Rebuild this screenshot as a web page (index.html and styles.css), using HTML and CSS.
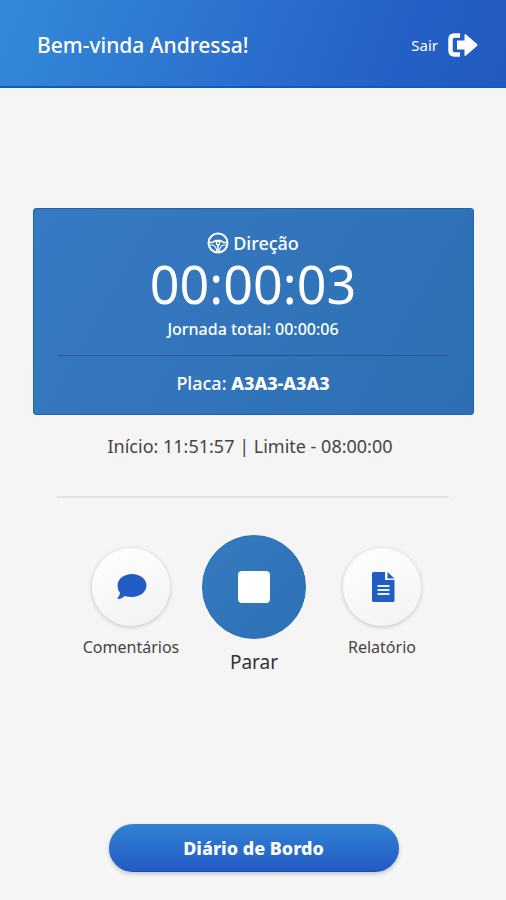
FILE: index.html
```html
<!DOCTYPE html>
<html lang="pt-BR">
<head>
  <meta charset="utf-8">
  <meta name="viewport" content="width=device-width, initial-scale=1">
  <title>Jornada</title>
  <link rel="stylesheet" href="styles.css">
</head>
<body>
  <header class="topbar">
    <h1 class="welcome">Bem-vinda Andressa!</h1>
    <a class="logout" href="#sair">
      Sair
      <svg class="logout-icon" viewBox="0 0 30 24" aria-hidden="true">
        <path d="M12 2.500H6.500Q2.500 2.500 2.500 6.500V17.500Q2.500 21.500 6.500 21.500H12" fill="none" stroke="currentColor" stroke-width="4.500"/>
        <path d="M9 7.500H16.500V2Q16.500 .5 18 1.500L29 11Q30 12 29 13L18 22.500Q16.500 23.500 16.500 22V16.500H9Z" fill="currentColor"/>
      </svg>
    </a>
  </header>

  <main class="content">
    <section class="card">
      <h2 class="status">
        <svg class="wheel-icon" viewBox="0 0 22 22" fill="none" stroke="currentColor" stroke-width="2" aria-hidden="true">
          <circle cx="11" cy="11" r="9.500"/>
          <path d="M2 10.500H5.500L8.500 8.500H13.500L16.500 10.500H20" stroke-width="1.700"/>
          <path d="M2.500 13H5.500Q9.500 14 9.800 20M19.500 13H16.500Q12.500 14 12.200 20" stroke-width="1.200"/>
          <path d="M8.500 9H13.500L13 12.500L11 14.500L9 12.500Z" fill="currentColor" stroke="none"/>
          <path d="M11 13V20" stroke-width="1.500"/>
          <circle cx="11" cy="11" r="1" fill="#3274ba" stroke="none"/>
        </svg>
        Direção
      </h2>
      <p class="timer">00:00:03</p>
      <p class="total">Jornada total: 00:00:06</p>
      <p class="plate">Placa: <strong>A3A3-A3A3</strong></p>
    </section>

    <p class="limits">Início: 11:51:57 | Limite - 08:00:00</p>

    <div class="actions">
      <button class="action" type="button">
        <span class="disc">
          <svg class="disc-icon" viewBox="0 0 30 30" fill="currentColor" aria-hidden="true">
            <path d="M16 2C24 2 30.500 7 30.500 13.500S24 25 16 25Q12 25 8.500 24Q6 27 2 27Q1 27 1.500 26Q3.500 24 4 21Q1.500 18 1.500 13.500C1.500 7 8 2 16 2Z"/>
          </svg>
        </span>
        Comentários
      </button>
      <button class="action action-main" type="button">
        <span class="disc disc-main"><span class="stop"></span></span>
        Parar
      </button>
      <button class="action" type="button">
        <span class="disc">
          <svg class="disc-icon" viewBox="0 0 30 30" aria-hidden="true">
            <path d="M6.500 0H18V8H27.500V28.500Q27.500 30 26 30H6.500Q5 30 5 28.500V1.500Q5 0 6.500 0Z" fill="currentColor"/>
            <path d="M20.500 0L27.500 6.500H20.500Z" fill="currentColor"/>
            <path d="M10.500 14H22.500M10.500 18H22.500M10.500 22H22.500" stroke="#e8effb" stroke-width="2"/>
          </svg>
        </span>
        Relatório
      </button>
    </div>

    <button class="logbook" type="button">Diário de Bordo</button>
  </main>
</body>
</html>
```
FILE: styles.css
```css
* {
  box-sizing: border-box;
}

body {
  display: flex;
  flex-direction: column;
  min-height: 100vh;
  margin: 0;
  background: #f5f5f5;
  color: #444;
  font-family: "Noto Sans", sans-serif;
}

h1, h2, p {
  margin: 0;
  font-weight: 400;
}

strong {
  font-weight: 800;
}

button {
  padding: 0;
  border: 0;
  background: none;
  color: inherit;
  font: inherit;
  cursor: pointer;
}

.topbar {
  display: flex;
  align-items: center;
  justify-content: space-between;
  height: 88px;
  padding: 4px 28px 0 37px;
  border-bottom: 2px solid #0d5cc6;
  background: linear-gradient(110deg, #348ada, #2b6fce 50%, #235fc4 80%, #225bc0);
  color: #fff;
}

.welcome {
  font-size: 21px;
  font-weight: 500;
  line-height: 28px;
}

.logout {
  display: flex;
  align-items: center;
  gap: 10px;
  color: inherit;
  font-size: 15px;
  line-height: 20px;
  text-decoration: none;
}

.logout-icon {
  width: 30px;
  height: 24px;
}

.content {
  display: flex;
  flex: 1;
  flex-direction: column;
  padding: 120px 32px 28px 33px;
}

.card {
  padding: 21px 25px 18px 24px;
  border: 1px solid #1765b1;
  border-radius: 3px;
  background: linear-gradient(120deg, #367ac3, #2e6fb3);
  color: #fff;
  text-align: center;
}

.status {
  display: flex;
  align-items: center;
  justify-content: center;
  gap: 4px;
  font-size: 18px;
  font-weight: 500;
  line-height: 26px;
}

.wheel-icon {
  width: 22px;
  height: 22px;
}

.timer {
  padding-bottom: 4px;
  font-size: 52px;
  line-height: 56px;
}

.total {
  padding-bottom: 13px;
  border-bottom: 1px solid #285985;
  font-size: 16px;
  font-weight: 500;
  line-height: 26px;
}

.plate {
  padding-top: 14px;
  font-size: 18px;
  font-weight: 500;
  line-height: 26px;
}

.limits {
  margin: 0 25px 0 24px;
  padding: 18px 6px 37px 0;
  border-bottom: 2px solid #e2e2e2;
  font-size: 18px;
  line-height: 26px;
  text-align: center;
}

.actions {
  display: grid;
  grid-template-columns: 140fr 106fr 150fr;
  align-items: start;
  margin-top: 37px;
  padding: 0 17px 0 28px;
}

.action {
  display: flex;
  flex-direction: column;
  align-items: center;
  gap: 10px;
  padding-top: 13px;
  font-size: 16px;
  line-height: 22px;
}

.action-main {
  padding-top: 0;
  color: #333;
  font-size: 19px;
  line-height: 26px;
}

.disc {
  display: flex;
  align-items: center;
  justify-content: center;
  width: 78px;
  height: 78px;
  border-radius: 50%;
  background: linear-gradient(160deg, #fff, #f2f2f2);
  box-shadow: 0 1px 4px rgba(0, 0, 0, 0.22);
  color: #205dc4;
}

.disc-icon {
  width: 30px;
  height: 30px;
  overflow: visible;
}

.disc-main {
  width: 104px;
  height: 104px;
  border: 1px solid #2070b8;
  background: linear-gradient(135deg, #367ac0, #2c70b5);
  box-shadow: none;
}

.stop {
  width: 32px;
  height: 32px;
  border-radius: 4px;
  background: #fff;
}

.logbook {
  align-self: center;
  width: 290px;
  height: 48px;
  margin-top: auto;
  border-bottom: 1px solid #0d50bd;
  border-radius: 24px;
  background: linear-gradient(#3182d4, #235bc3);
  box-shadow: 0 2px 4px rgba(0, 0, 0, 0.2);
  color: #fff;
  font-size: 18px;
  font-weight: 800;
  line-height: 26px;
}
```
